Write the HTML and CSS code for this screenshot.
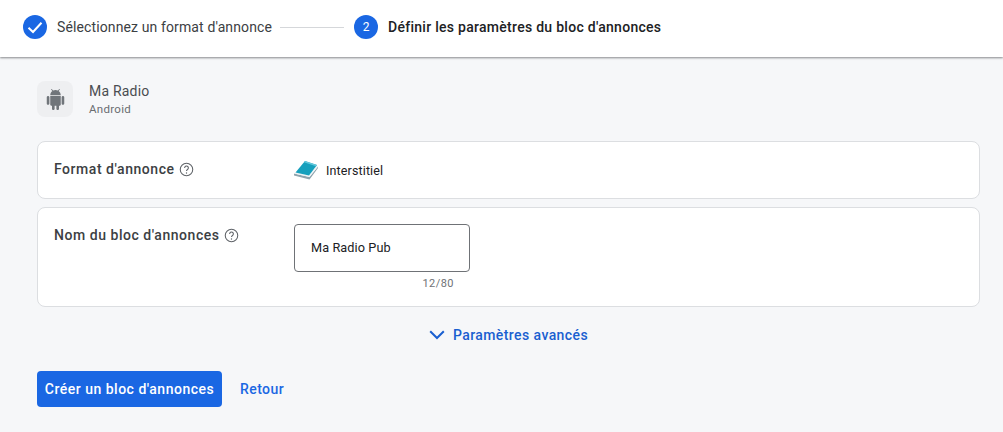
FILE: index.html
```html
<!DOCTYPE html>
<html lang="fr">
<head>
<meta charset="utf-8">
<title>Bloc d'annonces</title>
<link rel="stylesheet" href="styles.css">
</head>
<body>
<header class="stepper">
  <div class="step">
    <svg class="step-icon" viewBox="0 0 24 24" width="24" height="24"><circle cx="12" cy="12" r="12" fill="#1a67e3"/><path d="M5.500 12.800l4.500 4.200L18.500 7.800" fill="none" stroke="#fff" stroke-width="2"/></svg>
    <span class="step-label">Sélectionnez un format d'annonce</span>
  </div>
  <div class="step-line"></div>
  <div class="step">
    <span class="step-num">2</span>
    <span class="step-label step-label-active">Définir les paramètres du bloc d'annonces</span>
  </div>
</header>
<main class="content">
  <div class="app">
    <div class="app-icon">
      <svg viewBox="0 0 24 24" width="24" height="24"><path fill="#70757a" d="M6 18c0 .55.45 1 1 1h1v3.500c0 .83.67 1.500 1.500 1.500s1.500-.67 1.500-1.500V19h2v3.500c0 .83.67 1.500 1.500 1.500s1.500-.67 1.500-1.500V19h1c.55 0 1-.45 1-1V8H6v10zM3.500 8C2.670 8 2 8.670 2 9.500v7c0 .83.67 1.500 1.500 1.500S5 17.330 5 16.500v-7C5 8.670 4.330 8 3.500 8zm17 0c-.83 0-1.500.67-1.500 1.500v7c0 .83.67 1.500 1.500 1.500s1.500-.67 1.500-1.500v-7c0-.83-.67-1.500-1.500-1.500zm-4.970-5.840l1.300-1.300c.2-.2.2-.51 0-.71-.2-.2-.51-.2-.71 0l-1.480 1.480C13.850 1.230 12.950 1 12 1c-.96 0-1.860.23-2.660.63L7.850.15c-.2-.2-.51-.2-.71 0-.2.2-.2.51 0 .71l1.310 1.310C6.970 3.260 6 5.010 6 7h12c0-1.990-.97-3.750-2.470-4.840z"/></svg>
    </div>
    <div class="app-text">
      <div class="app-name">Ma Radio</div>
      <div class="app-os">Android</div>
    </div>
  </div>

  <section class="card card-format">
    <div class="card-label">Format d'annonce
      <svg class="help" viewBox="0 0 24 24" width="15" height="15"><circle cx="12" cy="12" r="10" fill="none" stroke="#5f6368" stroke-width="1.700"/><path d="M9 9.500a3 3 0 1 1 4.600 2.500c-1 .7-1.600 1.200-1.600 2.500" fill="none" stroke="#5f6368" stroke-width="1.700"/><circle cx="12" cy="17.500" r="1.100" fill="#5f6368"/></svg>
    </div>
    <div class="format-value">
      <svg class="book" viewBox="0 0 26 20" width="26" height="20"><path fill="#8fa3ad" d="M1 13.500v2L16.500 19.500 25 8V6.500L16.500 17z"/><path fill="#eef3f5" d="M1 13.500l15.500 3.500L25 6.500l-1.500-.5-7.500 9.500L3 12.500z"/><path fill="#17a0bd" d="M2.500 12.500L12 1l12 4-8 10.500z"/><path fill="#63c8dc" d="M12 1l12 4-1 1.300L11 2.200z"/></svg>
      <span>Interstitiel</span>
    </div>
  </section>

  <section class="card card-name">
    <div class="card-label">Nom du bloc d'annonces
      <svg class="help" viewBox="0 0 24 24" width="15" height="15"><circle cx="12" cy="12" r="10" fill="none" stroke="#5f6368" stroke-width="1.700"/><path d="M9 9.500a3 3 0 1 1 4.600 2.500c-1 .7-1.600 1.200-1.600 2.500" fill="none" stroke="#5f6368" stroke-width="1.700"/><circle cx="12" cy="17.500" r="1.100" fill="#5f6368"/></svg>
    </div>
    <div class="field">
      <div class="input">Ma Radio Pub</div>
      <div class="counter">12/80</div>
    </div>
  </section>

  <div class="advanced">
    <svg viewBox="0 0 16 10" width="16" height="10"><path d="M1.200 1.200L8 8l6.800-6.800" fill="none" stroke="#1a5fd0" stroke-width="2"/></svg>
    <span>Paramètres avancés</span>
  </div>

  <div class="actions">
    <button class="btn-primary" type="button">Créer un bloc d'annonces</button>
    <span class="btn-link">Retour</span>
  </div>
</main>
</body>
</html>
```
FILE: styles.css
```css
* { box-sizing: border-box; }
html, body { margin: 0; height: 100%; }
body {
  background: #f6f7f9;
  font-family: Roboto, "Liberation Sans", sans-serif;
  color: #3c4043;
  overflow: hidden;
}
.stepper {
  height: 57px;
  background: #fff;
  display: flex;
  align-items: center;
  padding: 0 0 3px 23px;
  box-shadow: 0 1px 2px rgba(60, 64, 67, .6);
}
.step { display: flex; align-items: center; }
.step-icon { display: block; flex: none; }
.step-label {
  margin-left: 10px;
  font-size: 14px;
  letter-spacing: .12px;
  color: #3c4043;
}
.step-label-active { font-weight: 480; color: #202124; letter-spacing: .28px; }
.step-line { width: 64px; height: 1px; background: #d5d7da; margin: 0 10px 0 8px; }
.step-num {
  width: 24px; height: 24px; border-radius: 50%;
  background: #1a67e3; color: #fff;
  font-size: 12px;
  display: flex; align-items: center; justify-content: center;
}
.content { padding: 24px 23px 0 37px; }
.app { display: flex; align-items: center; height: 36px; }
.app-icon {
  width: 36px; height: 36px; border-radius: 8px;
  background: #eeeff1;
  display: flex; align-items: center; justify-content: center;
}
.app-icon svg { width: 21px; height: 21px; }
.app-text { margin-left: 16px; }
.app-name { font-size: 14px; line-height: 20px; letter-spacing: .2px; color: #4a4d51; }
.app-os { font-size: 11.500px; line-height: 16px; letter-spacing: .3px; color: #6a6d71; }
.card {
  background: #fff;
  border: 1px solid #dcdee1;
  border-radius: 8px;
  display: flex;
  padding-left: 16px;
}
.card-format { height: 58px; margin-top: 24px; align-items: center; }
.card-name { height: 100px; margin-top: 8px; padding-top: 16px; }
.card-label {
  width: 240px;
  flex: none;
  font-size: 14px;
  font-weight: 480;
  letter-spacing: .54px;
  color: #3c4043;
  display: flex;
  align-items: center;
  gap: 4px;
  height: 20px;
}
.card-format .card-label { margin-top: -2px; }
.card-name .card-label { margin-top: 1px; }
.help { flex: none; }
.format-value {
  display: flex; align-items: center; gap: 7px;
  font-size: 12.500px;
  color: #202124;
  letter-spacing: .13px;
}
.format-value svg { display: block; }
.book { margin-left: -1px; }
.field { width: 176px; }
.input {
  height: 48px;
  border: 1px solid #6f7276;
  border-radius: 4px;
  padding: 0 16px 2px;
  display: flex; align-items: center;
  font-size: 12.700px;
  color: #202124;
  letter-spacing: .1px;
}
.counter {
  font-size: 11px;
  line-height: 16px;
  margin-top: 4px;
  padding-right: 16px;
  text-align: right;
  color: #6f7276;
  letter-spacing: .45px;
}
.advanced {
  display: flex; align-items: center; justify-content: center;
  gap: 8px;
  margin-top: 19px;
  height: 18px;
  color: #1a5fd0;
  font-size: 14px;
  font-weight: 480;
  letter-spacing: .42px;
}
.advanced svg { display: block; }
.actions { display: flex; align-items: center; margin-top: 27px; }
.btn-primary {
  width: 185px; height: 36px;
  background: #1a67e3;
  color: #fff;
  border: 0;
  border-radius: 4px;
  padding: 0 0 1px;
  font: 480 14px Roboto, "Liberation Sans", sans-serif;
  letter-spacing: .5px;
}
.btn-link {
  margin-left: 18px;
  font-size: 14px;
  font-weight: 480;
  letter-spacing: .42px;
  color: #1a67e3;
}
```
